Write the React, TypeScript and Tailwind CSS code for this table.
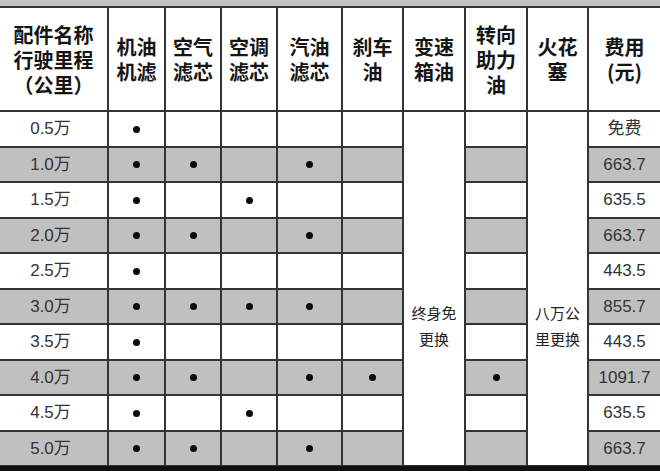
import React from "react";

type Row = { km: string; dots: boolean[]; price: string };
// dots: 机油, 空气, 空调, 汽油, 刹车, 转向
const rows: Row[] = [
  { km: "0.5万", dots: [true, false, false, false, false, false], price: "免费" },
  { km: "1.0万", dots: [true, true, false, true, false, false], price: "663.7" },
  { km: "1.5万", dots: [true, false, true, false, false, false], price: "635.5" },
  { km: "2.0万", dots: [true, true, false, true, false, false], price: "663.7" },
  { km: "2.5万", dots: [true, false, false, false, false, false], price: "443.5" },
  { km: "3.0万", dots: [true, true, true, true, false, false], price: "855.7" },
  { km: "3.5万", dots: [true, false, false, false, false, false], price: "443.5" },
  { km: "4.0万", dots: [true, true, false, true, true, true], price: "1091.7" },
  { km: "4.5万", dots: [true, false, true, false, false, false], price: "635.5" },
  { km: "5.0万", dots: [true, true, false, true, false, false], price: "663.7" },
];

const headFont = { fontFamily: '"Noto Sans CJK SC", "Noto Sans", sans-serif' };
const bodyFont = { fontFamily: '"Liberation Sans", "Noto Sans CJK SC", sans-serif' };

function Head({ lines }: { lines: string[] }) {
  return (
    <div
      className="bg-white flex flex-col items-center justify-center text-[20px] font-bold text-[#151515]"
      style={headFont}
    >
      {lines.map((l, i) => (
        <div key={i} className="h-[25px] leading-[25px]">
          {l}
        </div>
      ))}
    </div>
  );
}

function Dot() {
  return <div className="w-[7px] h-[7px] rounded-full bg-[#0a0a0a]" />;
}

export default function App() {
  return (
    <div className="w-[660px] h-[471px] overflow-hidden bg-white">
      <div className="h-[6px] bg-[#c3c3c3]" />
      <div className="grid gap-[2px] bg-[#343434] pt-[2px] grid-cols-[107px_55px_54px_54px_63px_59px_60px_60px_59px_1fr] grid-rows-[102px_34px_33px_34px_33px_34px_33px_34px_33px_34px_33px]">
        <Head lines={["配件名称", "行驶里程", "（公里）"]} />
        <Head lines={["机油", "机滤"]} />
        <Head lines={["空气", "滤芯"]} />
        <Head lines={["空调", "滤芯"]} />
        <Head lines={["汽油", "滤芯"]} />
        <Head lines={["刹车", "油"]} />
        <Head lines={["变速", "箱油"]} />
        <Head lines={["转向", "助力", "油"]} />
        <Head lines={["火花", "塞"]} />
        <Head lines={["费用", "(元)"]} />
        {rows.map((r, ri) => {
          const bg = ri % 2 === 1 ? "bg-[#c0c0c0]" : "bg-white";
          return (
            <React.Fragment key={ri}>
              <div
                className={`${bg} flex items-center justify-center pr-[6px] text-[17px] text-[#333]`}
                style={bodyFont}
              >
                {r.km}
              </div>
              {r.dots.slice(0, 5).map((d, di) => (
                <div key={di} className={`${bg} flex items-center justify-center`}>
                  {d && <Dot />}
                </div>
              ))}
              {ri === 0 && (
                <div
                  className="row-span-10 bg-white flex flex-col items-center pt-[188px] text-[15px] leading-[26px] text-[#222]"
                  style={headFont}
                >
                  <div>终身免</div>
                  <div>更换</div>
                </div>
              )}
              <div className={`${bg} flex items-center justify-center`}>
                {r.dots[5] && <Dot />}
              </div>
              {ri === 0 && (
                <div
                  className="row-span-10 bg-white flex flex-col items-center pt-[188px] text-[15px] leading-[26px] text-[#222]"
                  style={headFont}
                >
                  <div>八万公</div>
                  <div>里更换</div>
                </div>
              )}
              <div
                className={`${bg} flex items-center justify-center text-[17px] text-[#333]`}
                style={bodyFont}
              >
                {r.price}
              </div>
            </React.Fragment>
          );
        })}
      </div>
      <div className="h-[1px] bg-[#343434]" />
      <div className="h-[5px] bg-[#111]" />
    </div>
  );
}
